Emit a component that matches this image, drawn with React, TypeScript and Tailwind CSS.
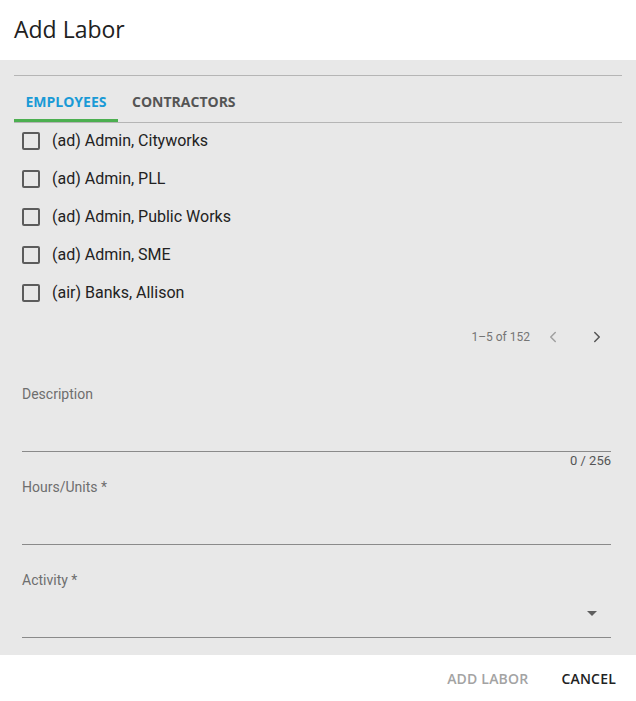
import React from 'react';
import { ChevronLeft, ChevronRight } from 'lucide-react';

const employees = [
  '(ad) Admin, Cityworks',
  '(ad) Admin, PLL',
  '(ad) Admin, Public Works',
  '(ad) Admin, SME',
  '(air) Banks, Allison',
];

const roboto = { fontFamily: 'Roboto, "Liberation Sans", sans-serif' };
const openSans = { fontFamily: '"Open Sans", sans-serif' };

const Field: React.FC<{ label: string; className?: string; select?: boolean }> = ({ label, className, select }) => (
  <div className={className}>
    <div className="text-[14px] leading-[17px] text-[#6e6e6e]">{label}</div>
    <div className="h-[49px] border-b border-[#8a8a8a] flex items-center justify-end pr-[14px]">
      {select && (
        <svg width="10" height="5" viewBox="0 0 10 5">
          <path d="M0 0 L10 0 L5 5 Z" fill="#5f5f5f" />
        </svg>
      )}
    </div>
  </div>
);

export default function App() {
  return (
    <div className="w-[636px] h-[701px] bg-white flex flex-col" style={roboto}>
      <header className="h-[60px] px-[14px] flex items-center pb-[2px]">
        <h1 className="text-[23px] text-[#212121]" style={openSans}>
          Add Labor
        </h1>
      </header>

      <main className="bg-[#e8e8e8] pt-[15px] pb-[17px]">
        <div className="mx-[14px] border-t border-b border-[#b5b5b5] flex items-start" style={openSans}>
          <div className="w-[104px] flex flex-col items-center pt-[16px]">
            <span className="block text-[14px] font-bold text-[#1a9ad6] leading-[19px]">EMPLOYEES</span>
            <div className="mt-[8px] h-[3px] w-full bg-[#4caf50]" />
          </div>
          <div className="pl-[14px] pt-[16px]">
            <span className="block text-[14px] font-bold text-[#555555] leading-[19px]">CONTRACTORS</span>
          </div>
        </div>

        <ul className="px-[22px] -mt-px">
          {employees.map((name) => (
            <li key={name} className="h-[38px] flex items-center gap-[12px]">
              <span className="w-[18px] h-[18px] border-2 border-[#5c5c5c] rounded-[2px]" />
              <span className="text-[16px] text-[#222222]">{name}</span>
            </li>
          ))}
        </ul>

        <div className="h-[50px] flex items-center justify-end pr-[30px]">
          <span className="text-[12px] text-[#757575]">1–5 of 152</span>
          <ChevronLeft className="ml-[14px] w-[18px] h-[18px] text-[#a0a0a0]" strokeWidth={2} />
          <ChevronRight className="ml-[26px] w-[18px] h-[18px] text-[#555555]" strokeWidth={2} />
        </div>

        <div className="pl-[22px] pr-[25px]">
          <Field label="Description" className="pt-[24px]" />
          <div className="text-right text-[13px] leading-[17px] text-[#555555]">0 / 256</div>
          <Field label="Hours/Units *" className="mt-[10px]" />
          <Field label="Activity *" className="mt-[27px]" select />
        </div>
      </main>

      <footer className="flex-1 flex items-center justify-end gap-[33px] pr-[20px]" style={openSans}>
        <span className="text-[14px] font-semibold text-[#a3a3a3] tracking-[0.2px]">ADD LABOR</span>
        <span className="text-[14px] font-semibold text-[#222222] tracking-[0.2px]">CANCEL</span>
      </footer>
    </div>
  );
}
